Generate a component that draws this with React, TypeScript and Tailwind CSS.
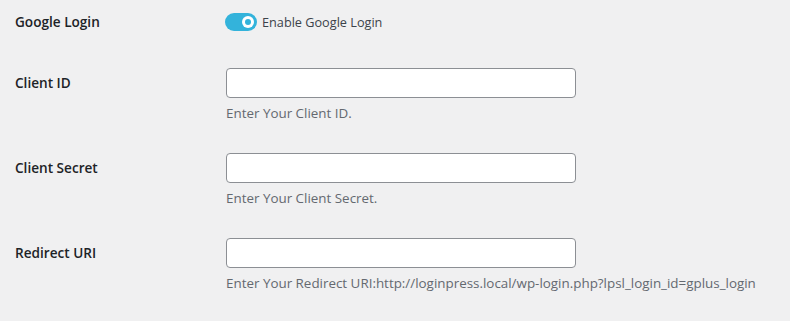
import React, { useState } from "react";

const fields = [
  { id: "client_id", label: "Client ID", help: "Enter Your Client ID." },
  { id: "client_secret", label: "Client Secret", help: "Enter Your Client Secret." },
  {
    id: "redirect_uri",
    label: "Redirect URI",
    help: "Enter Your Redirect URI:http://loginpress.local/wp-login.php?lpsl_login_id=gplus_login",
  },
];

export default function App() {
  const [enabled, setEnabled] = useState(true);
  const [values, setValues] = useState<Record<string, string>>({});

  return (
    <div className="min-h-[321px] w-[790px] bg-[#f0f0f1] pl-[15px] font-['Open_Sans',_'Noto_Sans',_sans-serif] text-[13px] text-[#3c434a]">
      <div className="flex h-[45px] items-start pt-[13px]">
        <div className="w-[210px] text-[13.6px] font-semibold leading-[18px] text-[#1d2327]">Google Login</div>
        <label className="flex cursor-pointer items-center gap-[5px]">
          <button
            type="button"
            onClick={() => setEnabled(!enabled)}
            className={`flex h-[18px] w-[32px] items-center rounded-full px-[3px] ${
              enabled ? "justify-end bg-[#33b3db]" : "justify-start bg-[#c3c4c7]"
            }`}
          >
            <span className="flex h-[12px] w-[12px] items-center justify-center rounded-full bg-white">
              <span className="h-[6px] w-[6px] rounded-full bg-[#33b3db]" />
            </span>
          </button>
          <span className="text-[12.7px] leading-[18px]">Enable Google Login</span>
        </label>
      </div>

      {fields.map((field) => (
        <div key={field.id} className="flex h-[85px] items-start pt-[23px]">
          <div className="w-[211px] pt-[6px] text-[13.6px] font-semibold leading-[18px] text-[#1d2327]">
            {field.label}
          </div>
          <div className="flex flex-col">
            <input
              type="text"
              value={values[field.id] ?? ""}
              onChange={(event) => setValues({ ...values, [field.id]: event.target.value })}
              className="h-[30px] w-[350px] rounded-[4px] border border-[#8c8f94] bg-white px-2 text-[14px] outline-none"
            />
            <p className="mt-[6px] text-[13.4px] leading-[18px] text-[#646970]">{field.help}</p>
          </div>
        </div>
      ))}
    </div>
  );
}
